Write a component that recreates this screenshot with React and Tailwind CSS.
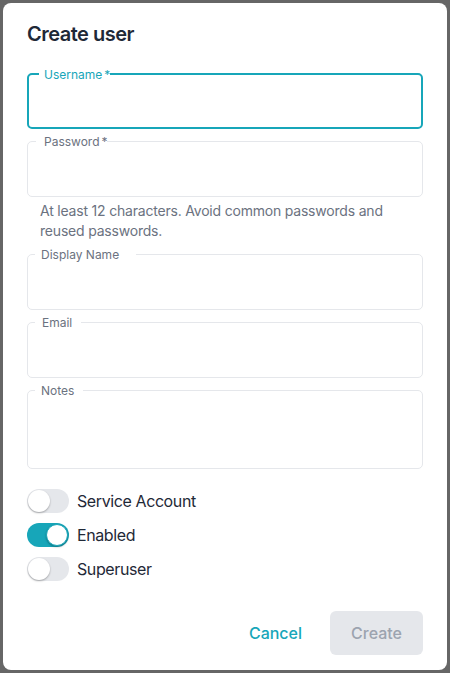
import React, { useState } from 'react';

const font = { fontFamily: 'Inter, "Noto Sans", sans-serif' };

function Field({ label, required, focused, notchLeft, notchWidth, textPad, tall }) {
  return (
    <div
      className={`relative rounded-[5px] ${tall ? 'h-[79px]' : 'h-[56px]'} ${
        focused ? 'border-2 border-[#17a6b9]' : 'border border-[#e5e7eb]'
      }`}
    >
      <span
        className={`absolute top-[-8px] h-4 bg-white text-[12px] leading-4 whitespace-nowrap ${
          focused ? 'text-[#17a6b9]' : 'text-[#6b7280]'
        } ${notchLeft} ${notchWidth} ${textPad}`}
      >
        {label}
        {required && <span className="ml-[2px]">*</span>}
      </span>
    </div>
  );
}

function Toggle({ label, checked, onChange }) {
  return (
    <label className="flex items-center gap-2 cursor-pointer h-[26px]">
      <button
        type="button"
        onClick={() => onChange(!checked)}
        className={`relative w-[42px] h-[24px] rounded-full transition-colors ${
          checked ? 'bg-[#17a6b9]' : 'bg-[#e5e7eb]'
        }`}
      >
        <span
          className={`absolute top-[1px] w-[22px] h-[22px] rounded-full bg-white shadow-[0_1px_2px_rgba(0,0,0,0.3)] transition-all ${
            checked ? 'left-[19px] border border-[#17a6b9]' : 'left-[1px]'
          }`}
        />
      </button>
      <span className="text-[16px] tracking-[-0.4px] text-[#1f2937]">{label}</span>
    </label>
  );
}

export default function App() {
  const [service, setService] = useState(false);
  const [enabled, setEnabled] = useState(true);
  const [superuser, setSuperuser] = useState(false);

  return (
    <div className="w-[450px] h-[673px] bg-[#666666] p-[3px]" style={font}>
      <div className="h-full bg-white rounded-[8px] px-6 pt-[17px] pb-[15px] flex flex-col">
        <h2 className="text-[20px] leading-[28px] font-semibold tracking-[-0.5px] text-[#1f2937]">Create user</h2>

        <div className="mt-[25px] flex flex-col gap-3">
          <Field label="Username" required focused notchLeft="left-[10px]" notchWidth="w-[71px]" textPad="pl-[5px]" />
          <div>
            <Field label="Password" required notchLeft="left-[8px]" notchWidth="w-[71px]" textPad="pl-[8px]" />
            <p className="mt-1 text-[14px] leading-[20px] tracking-[-0.2px] text-[#6b7280] pl-[13px]">
              At least 12 characters. Avoid common passwords and reused passwords.
            </p>
          </div>
          <div className="mt-px">
            <Field label="Display Name" notchLeft="left-[7px]" notchWidth="w-[101px]" textPad="pl-[6px]" />
          </div>
          <Field label="Email" notchLeft="left-[7px]" notchWidth="w-[46px]" textPad="pl-[7px]" />
          <Field label="Notes" tall notchLeft="left-[7px]" notchWidth="w-[48px]" textPad="pl-[6px]" />
        </div>

        <div className="mt-[19px] flex flex-col gap-2">
          <Toggle label="Service Account" checked={service} onChange={setService} />
          <Toggle label="Enabled" checked={enabled} onChange={setEnabled} />
          <Toggle label="Superuser" checked={superuser} onChange={setSuperuser} />
        </div>

        <div className="mt-auto flex justify-end items-center gap-3">
          <button type="button" className="h-[44px] px-4 text-[16px] font-medium text-[#17a6b9] rounded-md">
            Cancel
          </button>
          <button
            type="button"
            disabled
            className="h-[44px] w-[93px] text-[16px] font-medium text-[#9ca3af] bg-[#e5e7eb] rounded-md"
          >
            Create
          </button>
        </div>
      </div>
    </div>
  );
}
